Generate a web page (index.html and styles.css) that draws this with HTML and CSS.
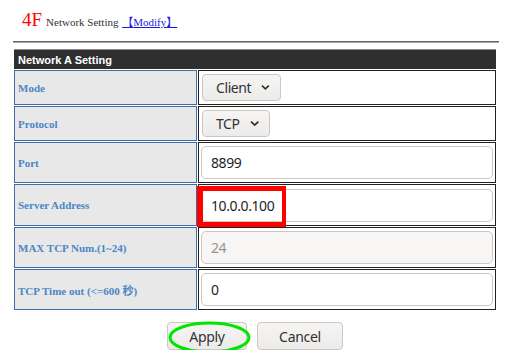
FILE: index.html
```html
<!DOCTYPE html>
<html>
<head>
<meta charset="utf-8">
<link rel="stylesheet" href="styles.css">
</head>
<body>
<div class="title">
  <span class="floor">4F</span>
  <span class="subtitle">Network Setting</span>
  <a class="modify" href="#">&nbsp;<span class="lb">【</span>Modify<span class="rb">】</span>&nbsp;</a>
</div>
<div class="rule"></div>
<div class="panel">
  <div class="head">Network A Setting</div>

  <div class="label">Mode</div>
  <div class="field">
    <button class="select select-mode"><span>Client</span><svg class="chev" width="11" height="7" viewBox="0 0 11 7"><path d="M1.2 1.2 L5.5 5.3 L9.8 1.2" fill="none" stroke="#2e3436" stroke-width="2.1"/></svg></button>
  </div>

  <div class="label">Protocol</div>
  <div class="field">
    <button class="select select-proto"><span>TCP</span><svg class="chev" width="11" height="7" viewBox="0 0 11 7"><path d="M1.2 1.2 L5.5 5.3 L9.8 1.2" fill="none" stroke="#2e3436" stroke-width="2.1"/></svg></button>
  </div>

  <div class="label">Port</div>
  <div class="field"><input class="text" value="8899"></div>

  <div class="label">Server Address</div>
  <div class="field field-mark">
    <input class="text" value="10.0.0.100">
    <div class="redbox"></div>
  </div>

  <div class="label">MAX TCP Num.(1~24)</div>
  <div class="field"><input class="text" value="24" disabled></div>

  <div class="label">TCP Time out (&lt;=600 秒)</div>
  <div class="field"><input class="text" value="0"></div>
</div>
<div class="actions">
  <button class="btn btn-apply">Apply<svg class="ring" width="83" height="33" viewBox="0 0 83 33"><ellipse cx="41.5" cy="16.5" rx="39.5" ry="14.5" fill="none" stroke="#00e600" stroke-width="3"/></svg></button>
  <button class="btn btn-cancel">Cancel</button>
</div>
</body>
</html>
```

FILE: styles.css
```css
html, body {
  margin: 0;
  padding: 0;
  background: #ffffff;
}

.title {
  padding: 10px 0 0 22px;
  height: 21px;
  line-height: 20px;
  font-family: "Liberation Serif", "Times New Roman", serif;
  white-space: nowrap;
}

.floor {
  color: #ff0000;
  font-size: 19px;
}

.subtitle {
  color: #333333;
  font-size: 11px;
}

.modify {
  color: #1a1adf;
  font-size: 11px;
  text-decoration: underline;
}

.lb,
.rb {
  font-family: "Noto Sans CJK SC", sans-serif;
  font-size: 11px;
}

.lb {
  margin-left: -3px;
}

.rb {
  margin-right: -3px;
}

.rule {
  margin: 10px 0 0 13px;
  width: 486px;
  height: 0;
  border-top: 1px solid #666666;
  border-bottom: 1px solid #a8a8a8;
}

.panel {
  margin: 6px 0 0 14px;
  width: 482px;
  display: grid;
  grid-template-columns: 183px 298px;
  grid-template-rows: 20px 35px 35px 41px 42px 41px 41px;
  gap: 1px;
}

.panel > div {
  box-sizing: border-box;
}

.head {
  grid-column: 1 / 3;
  background: #2f2f2f;
  border-top: 1px solid #8c8c8c;
  color: #ffffff;
  font-family: "Liberation Sans", Arial, sans-serif;
  font-weight: bold;
  font-size: 11px;
  padding-left: 4px;
  display: flex;
  align-items: center;
}

.label {
  background: #e8e8e8;
  border: 1px solid #3e6ea6;
  color: #4a86c6;
  font-family: "Liberation Serif", "Noto Sans CJK SC", serif;
  font-weight: bold;
  font-size: 11px;
  padding-left: 3px;
  display: flex;
  align-items: center;
}

.field {
  border: 1px solid #222222;
  background: #ffffff;
  padding: 0 2px;
  display: flex;
  align-items: center;
}

.field-mark {
  position: relative;
}

.select {
  box-sizing: border-box;
  height: 27px;
  margin-left: 1px;
  padding: 0 10px 0 13px;
  border: 1px solid #cdc7c2;
  border-radius: 4px;
  background: linear-gradient(#f6f5f4, #edebe9);
  font-family: "Noto Sans", "Open Sans", sans-serif;
  font-size: 14px;
  letter-spacing: -0.4px;
  color: #2e3436;
  display: flex;
  align-items: center;
  gap: 10px;
}

.select-mode {
  width: 79px;
}

.select-proto {
  width: 68px;
}

.chev {
  display: block;
}

.text {
  box-sizing: border-box;
  width: 100%;
  height: 33px;
  margin: 0;
  padding: 0 9px;
  border: 1px solid #cdc7c2;
  border-radius: 5px;
  background: #ffffff;
  font-family: "Noto Sans", "Open Sans", sans-serif;
  font-size: 14px;
  letter-spacing: -0.4px;
  color: #1e1e1e;
  outline: none;
}

.text:disabled {
  background: #f7f6f5;
  color: #929595;
}

.redbox {
  position: absolute;
  left: -2px;
  top: 1px;
  width: 89px;
  height: 41px;
  box-sizing: border-box;
  border-style: solid;
  border-color: #ff0000;
  border-width: 5px 4px 5px 6px;
}

.actions {
  width: 482px;
  margin: 12px 0 0 14px;
  display: flex;
  justify-content: center;
  gap: 10px;
}

.btn {
  position: relative;
  box-sizing: border-box;
  height: 28px;
  padding: 0;
  border: 1px solid #cdc7c2;
  border-radius: 4px;
  background: linear-gradient(#f6f5f4, #edebe9);
  font-family: "Noto Sans", "Open Sans", sans-serif;
  font-size: 14px;
  letter-spacing: -0.3px;
  color: #2e3436;
}

.btn-apply {
  width: 80px;
}

.btn-cancel {
  width: 86px;
}

.ring {
  position: absolute;
  left: 0;
  top: -2px;
}
```
